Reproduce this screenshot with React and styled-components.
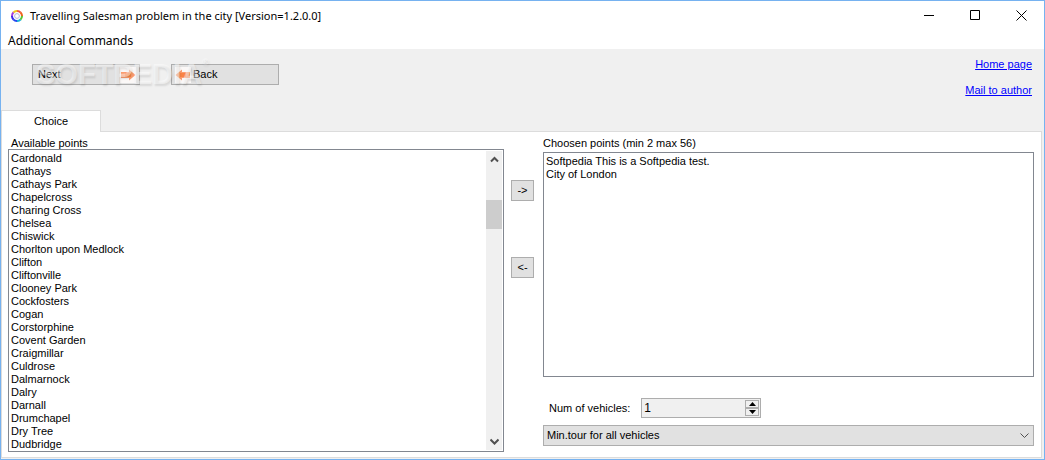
import { useState } from 'react';
import styled, { createGlobalStyle } from 'styled-components';

const AVAILABLE_POINTS = [
  'Cardonald',
  'Cathays',
  'Cathays Park',
  'Chapelcross',
  'Charing Cross',
  'Chelsea',
  'Chiswick',
  'Chorlton upon Medlock',
  'Clifton',
  'Cliftonville',
  'Clooney Park',
  'Cockfosters',
  'Cogan',
  'Corstorphine',
  'Covent Garden',
  'Craigmillar',
  'Culdrose',
  'Dalmarnock',
  'Dalry',
  'Darnall',
  'Drumchapel',
  'Dry Tree',
  'Dudbridge',
];

const CHOSEN_POINTS = ['Softpedia This is a Softpedia test.', 'City of London'];

const RING_COLORS = ['#f0503c', '#f0641e', '#58c832', '#1eb4d8', '#2846f0', '#3a28e8', '#a43ce0', '#f0c81c'];

const AppIcon = () => (
  <svg width="12" height="12" viewBox="0 0 12 12" aria-hidden="true">
    {RING_COLORS.map((color, index) => (
      <path
        key={color}
        d="M6 1 A5 5 0 0 1 9.7 2.6"
        fill="none"
        stroke={color}
        strokeWidth="2"
        transform={`rotate(${index * 45} 6 6)`}
      />
    ))}
    <circle cx="6" cy="6" r="2.4" fill="none" stroke="#b8b4d8" strokeWidth="1" />
  </svg>
);

const ArrowIcon = ({ left }) => (
  <svg width="16" height="16" viewBox="0 0 16 16" aria-hidden="true">
    <rect width="16" height="16" fill="#fbf8f7" />
    <g transform={left ? 'rotate(180 8 8)' : undefined}>
      <path d="M1 5h8V2.5L15.5 8 9 13.5V11H1z" fill="#fb9c6e" />
      <path d="M5 6h6v4H5z" fill="#f98345" />
    </g>
  </svg>
);

const Chevron = ({ up, width = 1 }) => (
  <svg width="9" height="9" viewBox="0 0 9 9" aria-hidden="true">
    <path
      d={up ? 'M1 6.5 4.5 3 8 6.5' : 'M.5 2.5 4.5 6.5 8.5 2.5'}
      fill="none"
      stroke="#505050"
      strokeWidth={width}
    />
  </svg>
);

const App = () => {
  const [available, setAvailable] = useState(AVAILABLE_POINTS);
  const [chosen, setChosen] = useState(CHOSEN_POINTS);
  const [selectedAvailable, setSelectedAvailable] = useState([]);
  const [selectedChosen, setSelectedChosen] = useState([]);
  const [vehicles, setVehicles] = useState(1);

  const readSelection = (e) =>
    Array.from(e.target.selectedOptions).map((option) => option.value);

  const handleAdd = () => {
    setAvailable((prev) => prev.filter((p) => !selectedAvailable.includes(p)));
    setChosen((prev) => [...prev, ...selectedAvailable]);
    setSelectedAvailable([]);
  };

  const handleRemove = () => {
    setChosen((prev) => prev.filter((p) => !selectedChosen.includes(p)));
    setAvailable((prev) => [...prev, ...selectedChosen].sort());
    setSelectedChosen([]);
  };

  return (
    <>
      <GlobalStyle />
      <Window>
        <TitleBar>
          <AppIcon />
          <Title>Travelling Salesman problem in the city [Version=1.2.0.0]</Title>
          <WindowButton aria-label="Minimize">
            <svg width="11" height="11" viewBox="0 0 11 11">
              <path d="M0 5.5h10" stroke="#000" />
            </svg>
          </WindowButton>
          <WindowButton aria-label="Maximize">
            <svg width="11" height="11" viewBox="0 0 11 11">
              <path d="M.5 .5h9v9h-9z" fill="none" stroke="#000" />
            </svg>
          </WindowButton>
          <WindowButton aria-label="Close">
            <svg width="11" height="11" viewBox="0 0 11 11">
              <path d="M.5 .5l10 10M10.5 .5l-10 10" stroke="#000" />
            </svg>
          </WindowButton>
        </TitleBar>

        <MenuBar>
          <MenuItem>Additional Commands</MenuItem>
        </MenuBar>

        <Toolbar>
          <NavButtons>
            <NavButton>
              <NavLabel>Next</NavLabel>
              <ArrowIcon />
            </NavButton>
            <NavButton>
              <ArrowIcon left />
              <NavLabel>Back</NavLabel>
            </NavButton>
            <Watermark>
              SOFTPEDIA<sup>®</sup>
            </Watermark>
          </NavButtons>
          <Links>
            <a href="#home">Home page</a>
            <a href="#mail">Mail to author</a>
          </Links>
        </Toolbar>

        <Tabs role="tablist">
          <Tab role="tab" aria-selected="true">
            Choice
          </Tab>
        </Tabs>

        <Panel role="tabpanel">
          <Column>
            <Label htmlFor="available">Available points</Label>
            <ListFrame>
              <List
                id="available"
                multiple
                size={23}
                value={selectedAvailable}
                onChange={(e) => setSelectedAvailable(readSelection(e))}
              >
                {available.map((point) => (
                  <option key={point}>{point}</option>
                ))}
              </List>
              <ScrollBar>
                <ScrollButton aria-label="Scroll up">
                  <Chevron up width={2} />
                </ScrollButton>
                <ScrollTrack>
                  <ScrollThumb />
                </ScrollTrack>
                <ScrollButton aria-label="Scroll down">
                  <Chevron width={2} />
                </ScrollButton>
              </ScrollBar>
            </ListFrame>
          </Column>

          <Movers>
            <MoveButton onClick={handleAdd}>-&gt;</MoveButton>
            <MoveButton onClick={handleRemove}>&lt;-</MoveButton>
          </Movers>

          <Column>
            <Label htmlFor="chosen" $flush>
              Choosen points (min 2 max 56)
            </Label>
            <ListFrame $spaced>
              <List
                id="chosen"
                multiple
                size={2}
                value={selectedChosen}
                onChange={(e) => setSelectedChosen(readSelection(e))}
              >
                {chosen.map((point) => (
                  <option key={point}>{point}</option>
                ))}
              </List>
            </ListFrame>
            <VehicleRow>
              <label htmlFor="vehicles">Num of vehicles:</label>
              <Spinner>
                <input
                  id="vehicles"
                  type="text"
                  inputMode="numeric"
                  value={vehicles}
                  onChange={(e) => setVehicles(Number(e.target.value) || 1)}
                />
                <SpinButtons>
                  <SpinButton aria-label="More vehicles" onClick={() => setVehicles(vehicles + 1)}>
                    <svg width="7" height="4" viewBox="0 0 7 4">
                      <path d="M0 4 3.5 0 7 4z" />
                    </svg>
                  </SpinButton>
                  <SpinButton
                    aria-label="Fewer vehicles"
                    onClick={() => setVehicles(Math.max(1, vehicles - 1))}
                  >
                    <svg width="7" height="4" viewBox="0 0 7 4">
                      <path d="M0 0 3.5 4 7 0z" />
                    </svg>
                  </SpinButton>
                </SpinButtons>
              </Spinner>
            </VehicleRow>
            <SelectFrame>
              <select aria-label="Tour type">
                <option>Min.tour for all vehicles</option>
              </select>
              <Chevron />
            </SelectFrame>
          </Column>
        </Panel>
      </Window>
    </>
  );
};

const GlobalStyle = createGlobalStyle`
  * {
    box-sizing: border-box;
  }

  body {
    margin: 0;
    font-family: 'Liberation Sans', Arial, sans-serif;
    font-size: 11px;
    line-height: 13px;
    color: #000;
  }

  button,
  input,
  select {
    margin: 0;
    padding: 0;
    font: inherit;
    color: inherit;
  }

  svg {
    display: block;
    flex-shrink: 0;
  }
`;

const Window = styled.div`
  display: flex;
  flex-direction: column;
  min-height: 100vh;
  padding-bottom: 1px;
  border: 1px solid #76b2f0;
  background: #f0f0f0;
`;

const TitleBar = styled.header`
  display: flex;
  align-items: center;
  height: 29px;
  padding-left: 10px;
  background: #fff;
  font-family: 'Noto Sans', 'Open Sans', sans-serif;
  font-size: 11px;
`;

const Title = styled.span`
  flex: 1;
  margin-left: 7px;
  white-space: nowrap;
`;

const WindowButton = styled.button`
  display: flex;
  align-items: center;
  justify-content: center;
  width: 46px;
  height: 29px;
  border: none;
  background: none;
`;

const MenuBar = styled.nav`
  display: flex;
  align-items: flex-end;
  height: 19px;
  padding: 0 0 2px 7px;
  background: #fff;
`;

const MenuItem = styled.button`
  border: none;
  background: none;
  font-family: 'Noto Sans', 'Open Sans', sans-serif;
  font-size: 12px;
`;

const Toolbar = styled.div`
  display: flex;
  justify-content: space-between;
  height: 61px;
  padding: 9px 12px 0 31px;
`;

const NavButtons = styled.div`
  position: relative;
  display: flex;
  gap: 31px;
  height: 21px;
  margin-top: 6px;
`;

const NavButton = styled.button`
  display: flex;
  align-items: center;
  width: 108px;
  height: 21px;
  padding: 0 3px;
  border: 1px solid #adadad;
  background: #e1e1e1;
`;

const NavLabel = styled.span`
  flex: 1;
  padding: 0 2px;
  text-align: left;
`;

const Watermark = styled.span`
  position: absolute;
  top: -6px;
  left: 4px;
  font-size: 29px;
  font-weight: 700;
  line-height: 32px;
  color: rgba(255, 255, 255, 0.45);
  text-shadow: 1px 2px 2px rgba(0, 0, 0, 0.1);
  pointer-events: none;

  sup {
    font-size: 9px;
    line-height: 9px;
    vertical-align: top;
  }
`;

const Links = styled.div`
  display: flex;
  flex-direction: column;
  align-items: flex-end;
  gap: 13px;

  a {
    color: #00f;
  }
`;

const Tabs = styled.div`
  display: flex;
  height: 21px;
`;

const Tab = styled.button`
  width: 100px;
  height: 22px;
  border: 1px solid #dcdcdc;
  border-bottom: none;
  background: #fff;
  z-index: 1;
`;

const Panel = styled.main`
  flex: 1;
  display: grid;
  grid-template-columns: minmax(0, 496fr) 39px minmax(0, 491fr);
  margin-right: 2px;
  padding: 5px 7px 5px 6px;
  border: 1px solid #dcdcdc;
  background: #fff;
`;

const Column = styled.div`
  display: flex;
  flex-direction: column;
`;

const Label = styled.label`
  height: 12px;
  padding-left: ${({ $flush }) => ($flush ? '0' : '3px')};
`;

const ListFrame = styled.div`
  flex: 1;
  display: flex;
  margin-top: ${({ $spaced }) => ($spaced ? '3px' : '0')};
  border: 1px solid #828790;
  background: #fff;
`;

const List = styled.select`
  flex: 1;
  min-width: 0;
  padding: 2px 0 0;
  border: none;
  outline: none;
  background: #fff;
  overflow: hidden;

  option {
    min-height: 13px;
    padding: 0 2px;
    line-height: 13px;
  }
`;

const ScrollBar = styled.div`
  display: flex;
  flex-direction: column;
  width: 16px;
  margin: 1px;
  background: #f0f0f0;
`;

const ScrollButton = styled.button`
  display: flex;
  align-items: center;
  justify-content: center;
  height: 17px;
  border: none;
  background: none;
`;

const ScrollTrack = styled.div`
  flex: 1;
  padding-top: 32px;
`;

const ScrollThumb = styled.div`
  height: 29px;
  background: #cdcdcd;
`;

const Movers = styled.div`
  display: flex;
  flex-direction: column;
  gap: 56px;
  padding: 43px 0 0 7px;
`;

const MoveButton = styled.button`
  width: 23px;
  height: 21px;
  border: 1px solid #adadad;
  background: #e1e1e1;
`;

const VehicleRow = styled.div`
  display: flex;
  align-items: center;
  gap: 11px;
  margin: 21px 0 7px 6px;
`;

const Spinner = styled.div`
  display: flex;
  width: 120px;
  height: 20px;
  padding: 1px;
  border: 1px solid #adadad;
  background: #f0f0f0;

  input {
    flex: 1;
    min-width: 0;
    height: 15px;
    padding-left: 1px;
    border: none;
    outline: none;
    background: none;
    font-size: 12px;
  }
`;

const SpinButtons = styled.div`
  display: flex;
  flex-direction: column;
  width: 14px;
`;

const SpinButton = styled.button`
  flex: 1;
  display: flex;
  align-items: center;
  justify-content: center;
  border: 1px solid #adadad;
  background: #f0f0f0;
`;

const SelectFrame = styled.div`
  display: flex;
  align-items: center;
  height: 21px;
  margin-bottom: 6px;
  padding-right: 4px;
  border: 1px solid #adadad;
  background: #e1e1e1;

  select {
    flex: 1;
    height: 19px;
    padding-left: 3px;
    border: none;
    outline: none;
    background: none;
    appearance: none;
  }
`;

export default App;
